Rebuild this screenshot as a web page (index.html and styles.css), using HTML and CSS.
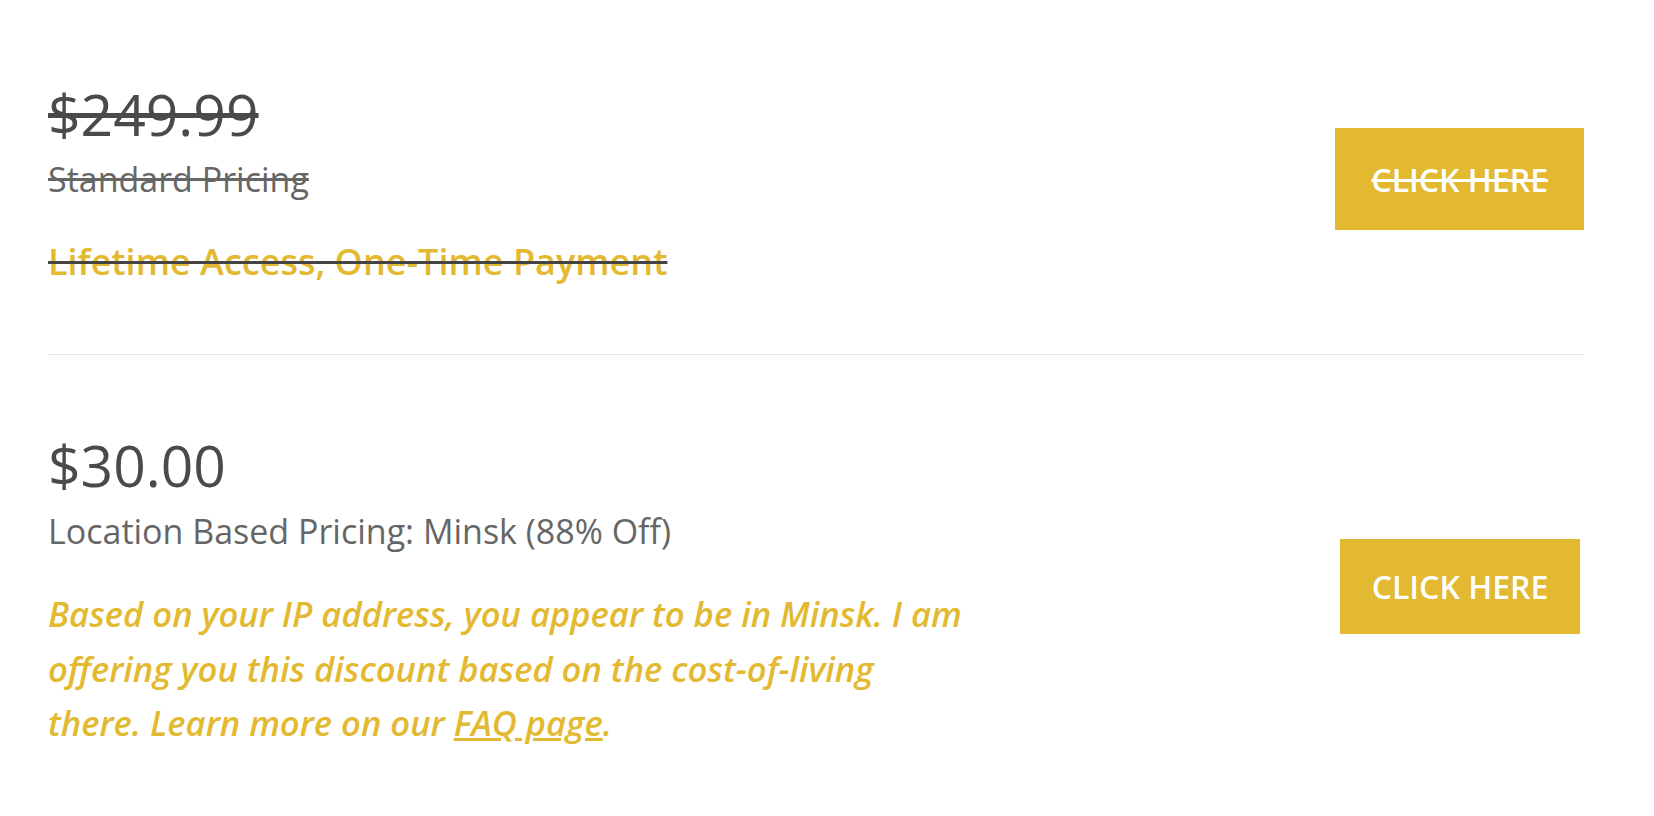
FILE: index.html
```html
<!DOCTYPE html>
<html>
  <head>
    <meta charset="utf-8" />
    <title>Pricing</title>
    <link rel="stylesheet" href="styles.css">
  </head>
  <body>
    <div id="pricing">

      <!-- Old price, crossed out -->
      <div class="offer offer-old">
        <div class="offer-text">
          <div class="price"><s>$249.99</s></div>
          <div class="price-label"><s>Standard Pricing</s></div>
          <div class="price-note"><s><span>Lifetime Access, One-Time Payment</span></s></div>
        </div>
        <div class="offer-action">
          <a class="btn btn-old" href="#"><s>Click Here</s></a>
        </div>
      </div>

      <!-- Location based price -->
      <div class="offer">
        <div class="offer-text">
          <div class="price">$30.00</div>
          <div class="price-label">Location Based Pricing: Minsk (88% Off)</div>
          <p class="price-info">Based on your IP address, you appear to be in Minsk. I am offering you this discount based on the cost-of-living there. Learn more on our <a href="#">FAQ page</a>.</p>
        </div>
        <div class="offer-action">
          <a class="btn" href="#">Click Here</a>
        </div>
      </div>

    </div>
  </body>
</html>
```

FILE: styles.css
```css
/* Pricing block */
body {
  font-family: "Open Sans", "Liberation Sans", sans-serif;
  background-color: #fff;
  margin: 0;
  padding: 0;
}
#pricing {
  padding: 0 70px 0 48px;
}
.offer {
  display: flex;
  align-items: center;
  padding: 76px 0 60px;
}
.offer-old {
  padding: 80px 0 67px;
  border-bottom: 1px solid #e6e6e6;
}
.offer-text {
  flex: 1;
}
.offer-action {
  flex: 0 0 248px;
  display: flex;
  justify-content: center;
  margin-bottom: 9px;
}
.price {
  font-size: 57px;
  line-height: 1.2;
  color: #4a4a4a;
  margin-bottom: 8px;
}
.price-label {
  font-size: 34px;
  line-height: 1.4;
  color: #666;
}
.price-note {
  font-size: 36px;
  font-weight: 600;
  line-height: 1.4;
  color: #444;
  margin-top: 33px;
}
.price-note span {
  color: #e2b930;
}
.price-info {
  max-width: 920px;
  margin: 32px 0 0;
  font-size: 34.6px;
  font-weight: 600;
  font-style: italic;
  line-height: 54.3px;
  color: #e2b930;
}
.price-info a {
  color: #e2b930;
}
.btn {
  display: inline-block;
  padding: 26px 31.5px;
  background-color: #e2b930;
  color: #fff;
  font-size: 32px;
  font-weight: 600;
  line-height: 43px;
  text-transform: uppercase;
  text-decoration: none;
  white-space: nowrap;
}
.btn-old {
  padding: 29.5px 36px;
}
```
